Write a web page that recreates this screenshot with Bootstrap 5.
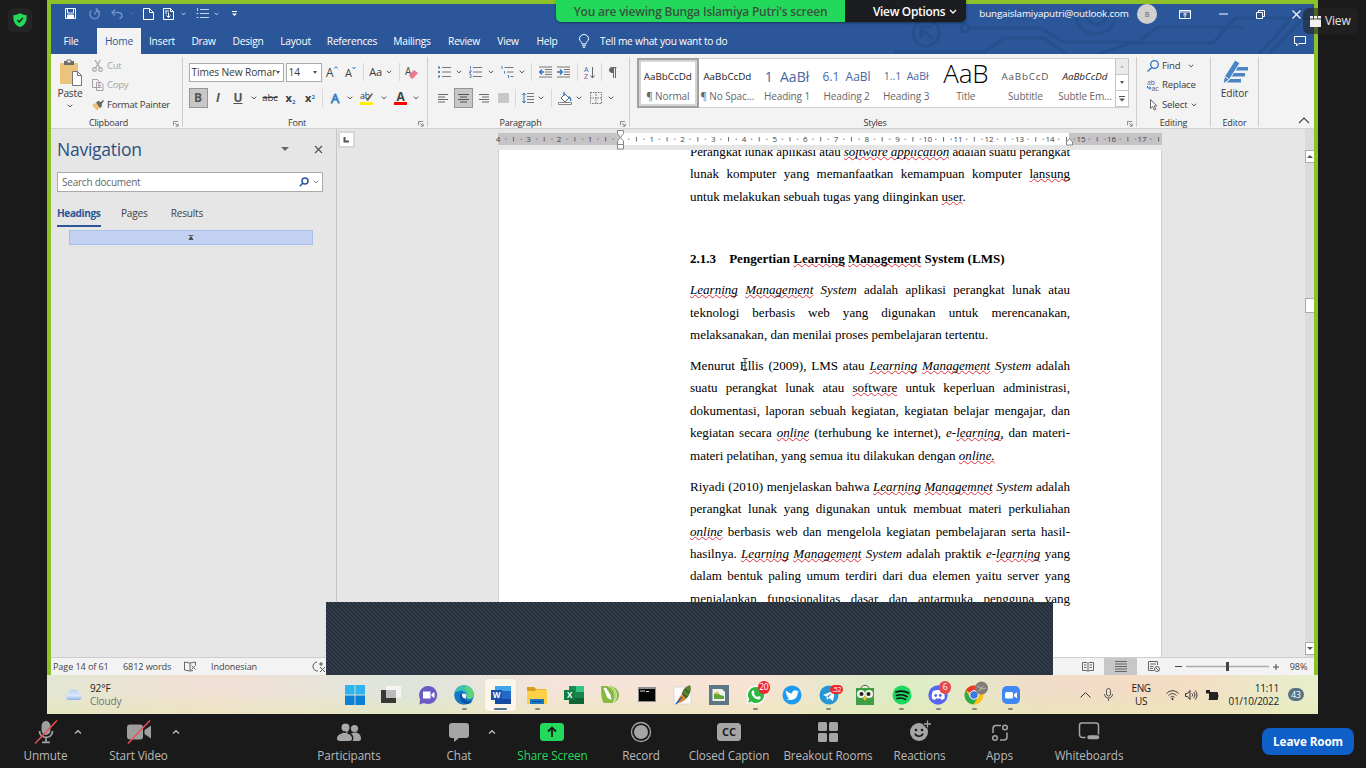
<!DOCTYPE html>
<html lang="id">
<head>
<meta charset="utf-8">
<title>Shared screen</title>
<link rel="stylesheet" href="https://cdn.jsdelivr.net/npm/bootstrap@5.3.0/dist/css/bootstrap.min.css">
<script src="https://cdn.jsdelivr.net/npm/bootstrap@5.3.0/dist/js/bootstrap.bundle.min.js"></script>
<style>
body{width:1366px;height:768px;overflow:hidden;background:#1a1a1a;font-family:"Open Sans","Liberation Sans",sans-serif;font-size:9.6px;line-height:12px;letter-spacing:-.18px;color:#444}
svg{display:block;flex:none;overflow:visible}
.stage{height:714px}
.shared{margin-left:47px;width:1271px}
.word{height:675px;border:solid #8dc127;border-width:4px 4px 0;background:#e6e6e6}
.g{display:grid;align-items:center;justify-items:center;white-space:nowrap}
/* title bar */
.bluebar{background:#2b579a;color:#fff;height:50px}
.titlerow{height:24px}
.quick{grid-template-columns:24px 24px 21px 8px 26px 15px 15px 22px 6px 30px;padding-left:7px;height:19px}
.wctl{grid-template-columns:148px 38px 38px 38px 37px 35px;height:18px;font-size:9.8px;letter-spacing:-.14px}
.ava{width:20px;height:20px;background:#d2d0ce;color:#605e5c;font-size:7.5px}
.rtabs{grid-template-columns:40px 6px 44px 42px 41px 48px 47px 66px 54px 50px 38px 40px 33px 130px 1fr;height:26px;font-size:10.2px;letter-spacing:-.24px}
.rtabs .on{background:#f3f3f3;color:#2b579a;width:44px;height:26px;line-height:26px;text-align:center}
.circuit{right:0;top:0}
/* ribbon */
.ribbon{height:75px;background:#f3f3f3;border-bottom:1px solid #d2d0ce;padding-top:3px;color:#3b3a39}
.grp{height:70px;border-right:1px solid #d0cecd;position:relative}
.gl{height:12px;margin:auto 0 -2px;text-align:center;font-size:9px;line-height:12px;color:#333}
.launch{right:3px;bottom:0}
.clip{width:132px}.fnt{width:245px}.par{width:202px}.sty{width:507px}.edi{width:74px}.edr{width:48px}
.pastecol{width:38px;padding-top:3px;line-height:14px;font-size:10.2px}
.cmds{row-gap:7.5px;padding-top:2.5px}
.cmds>div{height:12px}
.cmds.cb{letter-spacing:-.28px;margin-left:-1px}
.edc{padding-left:10px}
.edc>div>svg:first-child{margin-right:3px}
.edtop{padding-top:2px;font-size:10.2px;line-height:16px}
.dis{color:#a6a4a2}
.r1,.r2{height:20px}
.r2{margin-top:6px}
.r1{margin-top:5px}
.f1{grid-template-columns:95px 2px 36px 2px 18px 18px 7px 18px 8px 13px 12px;padding-left:5.5px}
.f2{grid-template-columns:20px 20px 20px 11px 22px 19px 20px 5px 20px 9px 26px 7px 26px 6px;padding-left:5px}
.p1{grid-template-columns:20px 10px 23px 8px 24px 6px 13px 14px 22px 6px 18px 7px 16px;padding-left:6px}
.p2{grid-template-columns:18px 22px 19px 20px 5px 20px 6px 15px 12px 15px 20px 10px;padding-left:6px}
.combo{background:#fff;border:1px solid #ababab;height:19px;font-size:10.2px;line-height:17px;padding-left:2px;width:100%;letter-spacing:-.13px}
.tri{border:solid transparent;border-width:3px 2.5px 0;border-top-color:#555;width:0;height:0}
.sep{width:1px;height:18px;background:#dad8d6}
.prs{background:#c8c6c8;border:1px solid #979593;width:19px;height:20px;display:flex;align-items:center;justify-content:center}
.ink{font-weight:700;font-size:12px;color:#555;letter-spacing:0}
.xs{font-weight:700;font-size:11px;letter-spacing:0}
.xs sub,.xs sup{font-size:6px;color:#2b74c0}
.aa{font-size:11px}
.gal{margin:1px 0 0 7px;width:492px;height:50px;background:#fff;border:1px solid #d2d0ce;border-right:0}
.st{width:59.6px;padding:5px 0 3px;text-align:center;font-size:10px;color:#666;height:48px;white-space:nowrap;letter-spacing:-.1px;line-height:13px}
.st b{display:block;font-weight:400;height:26px;line-height:25px;color:#222;font-size:9.8px;letter-spacing:0}
.st.sel{outline:2px solid #a3a1a0;outline-offset:-1px;box-shadow:inset 0 0 0 3px #d6d4d4}
.st .h{color:#4667a0}
.st .t{font-size:26px;line-height:19px;letter-spacing:-.3px;font-weight:300;color:#000}
.st .h1s{font-size:14px}.st .h2s{font-size:12px}.st .h3s{font-size:10.5px}.st .sb{letter-spacing:.8px;color:#555}
.gs{width:14px;border:1px solid #c8c6c4;border-width:0 1px}
.gs>div{height:16px;display:flex;align-items:center;justify-content:center;border-bottom:1px solid #c8c6c4}
/* navigation pane */
.mid{height:528px}
.nav-p{width:286px;border-right:1px solid #c6c4c3;padding:0 0 0 6px}
.nav-t{font-size:17.5px;line-height:24px;color:#2b4f81;letter-spacing:-.25px;margin-top:8px;width:266px}
.navx{margin:0 0 0 25px}
.find{width:266px;height:20px;margin-top:11px;background:#fff;border:1px solid #ababab;padding:0 3px 0 4px;font-size:10px;color:#666;letter-spacing:-.23px}
.ntab{margin-top:13px;font-size:10.1px;line-height:17px;letter-spacing:-.2px}
.ntab span{height:22px}
.ntab .on{color:#2b579a;font-weight:700;border-bottom:2px solid #2b579a;width:44px;letter-spacing:-.4px}
.np{margin-left:20px}.nr{margin-left:23px}
.hsel{margin:3px 0 0 12px;width:244px;height:15px;background:#c3d2f2;border:1px solid #a8bfe9}
/* document */
.rul{height:21px}.rsvg{margin:4px 0 0 143px}
.tabsel{width:17px;height:17px;background:#fff;border:2px solid #d8d6d6;margin:2px 0 0 1px}
.page{margin-left:161px;width:664px;height:507px;background:#fff;border:solid #cfcdcd;border-width:0 1px;padding:0 91px 0 191px;overflow:hidden;font:13.05px/22.45px "Liberation Serif",serif;letter-spacing:0;color:#000}
.page p{margin:0 0 8.4px}
.page p span{display:block;text-align:justify;text-align-last:justify;white-space:nowrap}
.page p span.l{text-align-last:left}
.page u{text-decoration:underline wavy #e0323c .7px;text-underline-offset:0;text-decoration-skip-ink:none}
.page .first{margin-top:-9px;margin-bottom:40px}
.page .first span:first-child{letter-spacing:-.09px}
.vbar{width:9px;background:#dcdadd;padding-top:21px}
.vbar div{background:#fff;border:1px solid #ababab;border-right:0;height:13px;display:flex;align-items:center;justify-content:center}
.vbar .thumb{height:15px;margin-top:135px;margin-bottom:329px}
.status{height:18px;background:#f3f3f3;border-top:1px solid #cfcdcd;font-size:9.1px;line-height:17px;letter-spacing:-.1px}
.sl{grid-template-columns:54px 61px 43px 48px 67px;justify-items:start;padding-left:2px}
.sr{grid-template-columns:33px 33px 34px 14px 84px 14px 31px}
.vsel{width:33px;height:17px;background:#c8c6c8}
.blind{left:326px;top:602px;width:727px;height:73px;background:linear-gradient(45deg,#27313e 18%,#3b4652 18% 34%,#27313e 34% 68%,#3b4652 68% 84%,#27313e 84%) 0 0/4px 4px}
/* windows task bar */
.task{height:39px;background:linear-gradient(0deg,rgba(232,232,178,.55),rgba(255,255,255,0) 60%),linear-gradient(90deg,#e2e7d2,#f2dfd5 13%,#eae3d8 20%,#dde5dc 28%,#f5e4da 40%,#f8e3d4 56%,#dcecc6 66%,#e2ebc8 71%,#f1dcc9 78%,#f4ddc4 90%,#e6f0cd);letter-spacing:-.1px;color:#222}
.wth{width:289.8px;padding-left:17px;font-size:10px;line-height:13px}
.wt{margin-left:6px}
.apps>div{width:36.45px;height:39px;position:relative;display:flex;justify-content:center;padding-top:10px}
.apps .act{background:#fbf5ea;box-shadow:0 0 1px #ccb;border-radius:3px;position:absolute;width:31px;height:32px;top:4px;left:2px}
.apps svg{position:relative;width:20px;height:20px}
.dotline{width:5px;height:2px;border-radius:1px;background:#8a8a80;position:absolute;bottom:4px}
.wide{width:13px;background:#4f7596}
.tray{grid-template-columns:24px 22px 43px 19px 19px 23px;margin-left:44.500px;font-size:10px;line-height:13px;text-align:center;letter-spacing:-.3px}
.clk{font-size:10px;line-height:13px;padding-top:7px;letter-spacing:-.25px}
.n43{width:16px;height:13px;background:#587283;color:#fff;font-size:8.5px;line-height:13px;text-align:center;margin:0 14px 0 9px}
.bub{position:absolute;background:#f0282d;color:#fff;border-radius:9px;font-size:8.5px;line-height:12.5px;height:12.5px;min-width:12.5px;padding:0 1.5px;text-align:center;top:6px;left:20px;letter-spacing:-.3px}
.bub.tg{left:20px;font-size:7px;height:9px;line-height:9px;top:10px}.bub.dc{left:19px;background:#e8494f}
/* meeting controls */
.zoombar{height:54px;color:#b9b9b9;font-size:11.7px;letter-spacing:-.1px}
.zg{grid-template-columns:51px 37px 61px 96px 168px 52px 20px 95px 82px 94px 104px 79px 81px 98px;padding-left:20px;height:54px}
.zg>div{display:flex;flex-direction:column;align-items:center;position:relative;height:54px;padding-top:6px;line-height:17px}
.zg>div>svg{height:24px;width:26px;margin-bottom:3px}
.zg .c{justify-self:start;padding-top:15px}
.zg .c svg{width:14px;height:6px}
.cnt{position:absolute;left:75%;margin-left:-23px;top:7px}
.share{color:#23d95b}
.leave{background:#0e5fc7;color:#fff;font-weight:700;width:92px;height:27px;border-radius:8px;line-height:26px;text-align:center;margin:14px 12px 0 auto;letter-spacing:-.1px;font-size:11.7px}
.banner{left:556px;top:0;height:22px;font-size:11.9px;line-height:22px;font-weight:600;border-radius:0 0 5px 5px;overflow:hidden;z-index:3;box-shadow:0 1px 3px #0006}
.bn1{width:289px;background:#23d95b;color:#35533f;text-align:center}
.bn2{width:121px;background:#1c1d20;color:#fff;padding-left:28px;letter-spacing:-.3px}
.vbtn{left:1303px;top:8px;width:55px;height:26px;border-radius:6px;background:rgba(36,36,36,.6);color:#e4e4e4;font-size:12px;padding-left:7px;z-index:3}
.shield{left:8px;top:8px;width:24px;height:24px;background:#242424;border-radius:5px}
.caret-i{left:741px;top:358px}
</style>
</head>
<body>
<svg width="0" height="0" class="position-absolute">
<symbol id="ch" viewBox="0 0 6 4"><path d="M.8 .7 3 2.9 5.2 .7" fill="none" stroke="currentColor" stroke-width=".9"/></symbol>
<symbol id="la" viewBox="0 0 7 7"><path d="M.5 5V.5H6M2.5 2.5 5.6 5.6M6 3v3H3" fill="none" stroke="#666" stroke-width=".9"/></symbol>
<symbol id="up" viewBox="0 0 14 6"><path d="M4 4.6 7 1.8 10 4.6" fill="none" stroke="#b9b9b9" stroke-width="1.4"/></symbol>
</svg>

<main class="stage position-relative">
<div class="shared">
<div class="word d-flex flex-column">
  <header class="bluebar position-relative flex-shrink-0">
    <svg class="circuit position-absolute overflow-hidden" width="420" height="50" fill="none" stroke="#264f8e" stroke-width="3"><circle cx="32" cy="29" r="13"/><path d="M27 34V23h11M28 24l10 11"/><circle cx="71" cy="24" r="4"/><path d="M75 24h72l22 14h75l20-15h55l30 0M0 48h90l20-14h40l22 16M182 6c-4 32 42 32 40 0M190 5c2 20 24 20 24 0M365 50l42-46M375 50l45-48M205 50l32-11h82l22-25h79"/></svg>
    <div class="titlerow d-flex justify-content-between position-relative">
      <div class="quick g">
        <svg width="11" height="11" fill="none" stroke="#fff"><path d="M.5.5h10v10H.5zM2.500 .5v4.500h6V.5"/><path d="M2.500 10.500V7h6v3.500" fill="#fff"/></svg>
        <svg width="11" height="12" fill="none" stroke="#6f8fc4" stroke-width="1.500"><path d="M2.500 2.500A4.700 4.700 0 1 0 8 2M7.500 0v3.500H11M6 4v2.500"/></svg>
        <svg width="12" height="10" fill="none" stroke="#6f8fc4" stroke-width="1.500"><path d="M4 .5 1 3.500l3 3M1 3.500h6c5 0 5 5 1.500 6"/></svg>
        <svg width="5" height="3" color="#6f8fc4"><use href="#ch"/></svg>
        <svg width="11" height="12" fill="none" stroke="#fff"><path d="M.5.5h6l4 4v7H.5zM6.500.5v4h4"/></svg>
        <svg width="11" height="12" fill="none" stroke="#fff"><path d="M.5.5h7l3 3v8H.5zM7.500.5v3h3M2 3h4M2 5h2M5.500 4.500v5M3.500 7.500l2 2 2-2" /></svg>
        <svg width="5" height="4"><use href="#ch"/></svg>
        <svg width="13" height="11" fill="none" stroke="#c5d4ec"><path d="M4 1.500h9M4 5.500h9M4 9.500h9M1.500 0v3M.5 5.500h2M.5 9.500h2"/></svg>
        <svg width="5" height="4"><use href="#ch"/></svg>
        <svg width="5" height="6" fill="#fff"><path d="M0 0h5v1H0zM0 2.500h5L2.500 5z"/></svg>
      </div>
      <div class="wctl g">
        <span>bungaislamiyaputri@outlook.com</span>
        <span class="ava rounded-circle d-flex align-items-center justify-content-center">B</span>
        <svg width="12" height="9" fill="none" stroke="#fff"><path d="M.5.5h11v8H.5zM.5 2h11M6 7.500v-4M4.300 5 6 3.500 7.700 5"/></svg>
        <svg width="9" height="2"><path d="M0 1h9" stroke="#fff"/></svg>
        <svg width="9" height="9" fill="none" stroke="#fff"><path d="M.5 2.500h6v6h-6zM2.500 2V.5h6v6H7"/></svg>
        <svg width="9" height="9"><path d="m.5.5 8 8m0-8-8 8" stroke="#fff" stroke-width="1.100"/></svg>
      </div>
    </div>
    <div class="rtabs g position-relative">
      <span>File</span><i></i><span class="on">Home</span><span>Insert</span><span>Draw</span><span>Design</span><span>Layout</span><span>References</span><span>Mailings</span><span>Review</span><span>View</span><span>Help</span>
      <svg width="10" height="14" fill="none" stroke="#fff"><path d="M3 10C3 7.500 .5 7.500 .5 4.800a4.500 4.300 0 0 1 9 0C9.500 7.500 7 7.500 7 10zM3.200 11.700h3.600M3.800 13.300h2.400"/></svg>
      <span class="me-auto">Tell me what you want to do</span>
      <svg width="12" height="11" fill="none" stroke="#fff" class="ms-auto me-2"><path d="M.5.5h11v7H4.800L2.500 10V7.500h-2z"/></svg>
    </div>
  </header>

  <section class="ribbon d-flex flex-shrink-0">
    <div class="grp clip d-flex flex-column">
      <div class="d-flex">
        <div class="pastecol d-flex flex-column align-items-center">
          <svg width="24" height="26"><path d="M2 3h18v21H2z" fill="#e9c47a"/><path d="M6 1h10v4H6z" fill="#6b6b6b"/><path d="M9 0h4v3H9z" fill="#f3f3f3" stroke="#6b6b6b"/><path d="M14.500 11.500h5l4 4v10h-9z" fill="#fff" stroke="#777"/><path d="M19.500 11.500v4h4" fill="none" stroke="#777"/></svg>
          <span>Paste</span><svg width="6" height="4" class="mt-1"><use href="#ch"/></svg>
        </div>
        <div class="cmds cb d-flex flex-column ps-1">
          <div class="dis d-flex align-items-center gap-1"><svg width="11" height="12" fill="none" stroke="#a6a4a2" stroke-width="1.200"><path d="M3 0 8 8M8.500 0l-5 8"/><circle cx="2.500" cy="9.500" r="1.800"/><circle cx="8.500" cy="9.500" r="1.800"/></svg><span>Cut</span></div>
          <div class="dis d-flex align-items-center gap-1"><svg width="11" height="12" fill="#f3f3f3" stroke="#a99da9"><path d="M.5.5h5l1.500 2v6H.5zM4.500 3.500h4.500l2 2v6H4.500z"/><path d="M6 6.500h3M6 8.500h3.500"/></svg><span>Copy</span></div>
          <div class="d-flex align-items-center gap-1"><svg width="11" height="12"><path d="M0 6l4-2 4 4-3 3.500z" fill="#ecc075"/><path d="M4 3.500 6 2l3 1 2-2 1 1-2 2.500-.5 3.500L8 9z" fill="#666"/></svg><span>Format Painter</span></div>
        </div>
      </div>
      <div class="gl pe-3">Clipboard</div><svg class="launch position-absolute" width="6" height="6"><use href="#la"/></svg>
    </div>
    <div class="grp fnt d-flex flex-column">
      <div class="f1 r1 g">
        <div class="combo d-flex align-items-center justify-content-between pe-1">Times New Romar<i class="tri"></i></div><i></i>
        <div class="combo d-flex align-items-center justify-content-between pe-1">14<i class="tri"></i></div><i></i>
        <svg width="13" height="12"><text x="0" y="11" font-size="12" fill="#444">A</text><path d="m8.500 2.500 1.500-1.800 1.500 1.800" fill="none" stroke="#2b74c0"/></svg>
        <svg width="12" height="12"><text x="0" y="11" font-size="11" fill="#444">A</text><path d="m7.500 1 1.500 1.800L10.500 1" fill="none" stroke="#2b74c0"/></svg>
        <i class="sep"></i><span class="aa">Aa</span><svg width="6" height="4"><use href="#ch"/></svg><i class="sep"></i>
        <svg width="13" height="13"><text x="0" y="9" font-size="10" fill="#444">A</text><path d="m4 9 5-5 4 3-5 5.500H6z" fill="#e9798d"/></svg>
      </div>
      <div class="f2 r2 g">
        <div class="prs ink">B</div><i class="ink">I</i><span class="ink text-decoration-underline">U</span><svg width="6" height="4"><use href="#ch"/></svg>
        <s>abc</s><span class="xs">x<sub>2</sub></span><span class="xs">x<sup>2</sup></span><i class="sep"></i>
        <svg width="11" height="12"><text x="1" y="11" font-size="13" fill="#e8f1fb" stroke="#3f80c4" stroke-width=".9">A</text></svg><svg width="6" height="4"><use href="#ch"/></svg>
        <svg width="14" height="14"><text x="0" y="8" font-size="9" fill="#333">ab</text><path d="m6 9 6-7 1 1-5 7z" fill="#666"/><path d="M0 11h13v3H0z" fill="#ffef00"/></svg><svg width="6" height="4"><use href="#ch"/></svg>
        <svg width="13" height="14"><text x="2.500" y="9.500" font-size="12" fill="#444" font-weight="700">A</text><path d="M0 11h13v3H0z" fill="#f00"/></svg><svg width="6" height="4"><use href="#ch"/></svg>
      </div>
      <div class="gl pe-3">Font</div><svg class="launch position-absolute" width="6" height="6"><use href="#la"/></svg>
    </div>
    <div class="grp par d-flex flex-column">
      <div class="p1 r1 g">
        <svg width="13" height="12"><path d="M4 1.500h9M4 6h9M4 10.500h9" stroke="#777"/><path d="M0 .5h2v2H0zM0 5h2v2H0zM0 9.500h2v2H0z" fill="#3f80c4"/></svg><svg width="6" height="4"><use href="#ch"/></svg>
        <svg width="13" height="12"><path d="M4 1.500h9M4 6h9M4 10.500h9" stroke="#777"/><path d="M1.500 0v3M.5 4.500h1.500v1.500H.5v1H2M.5 8.500h1.500v3H.5" fill="none" stroke="#3f80c4" stroke-width=".9"/></svg><svg width="6" height="4"><use href="#ch"/></svg>
        <svg width="13" height="12"><path d="M3.500 1.500h9M6 6h6.500M9.500 10.500h3" stroke="#777"/><path d="M1 0v3M3.500 5v2.500M7.500 9v3" stroke="#3f80c4"/></svg><svg width="6" height="4"><use href="#ch"/></svg><i class="sep"></i>
        <svg width="13" height="12"><path d="M0 1h13M6 3.500h7M6 6h7M6 8.500h7M0 11h13" stroke="#777"/><path d="M5 6H1M3 3.500.7 6 3 8.500" stroke="#2b74c0" fill="none" stroke-width="1.300"/></svg>
        <svg width="13" height="12"><path d="M0 1h13M7 3.500h6M7 6h6M7 8.500h6M0 11h13" stroke="#777"/><path d="M0 6h5M3 3.500 5.300 6 3 8.500" stroke="#2b74c0" fill="none" stroke-width="1.300"/></svg><i class="sep"></i>
        <svg width="11" height="13"><text y="5.500" font-size="7" fill="#2b74c0">A</text><text y="13" font-size="7" fill="#7d4a9b">Z</text><path d="M8.500 1v11M6.500 9.500l2 2.500 2-2.500" fill="none" stroke="#666"/></svg><i class="sep"></i>
        <svg width="8" height="11"><path d="M7.500.5H3a2 2 0 0 0 0 5h1.500M4.500.5V11M6.500.5V11" fill="none" stroke="#666"/><path d="M3 .5h1.500v5H3a2.500 2.500 0 0 1 0-5" fill="#666"/></svg>
      </div>
      <div class="p2 r2 g">
        <svg width="10" height="9"><path d="M0 .5h10M0 3h7M0 5.500h10M0 8h7" stroke="#666"/></svg>
        <div class="prs"><svg width="11" height="9"><path d="M0 .5h11M2 3h7M0 5.500h11M2 8h7" stroke="#555"/></svg></div>
        <svg width="10" height="9"><path d="M0 .5h10M3 3h7M0 5.500h10M3 8h7" stroke="#666"/></svg>
        <svg width="11" height="10"><path d="M0 0h11v10H0z" fill="#c9c7c7"/></svg><i class="sep"></i>
        <svg width="12" height="12"><path d="M5 1.500h7M5 4.500h7M5 7.500h7M5 10.500h7" stroke="#777"/><path d="M2 1v10M.3 3 2 1l1.700 2M.3 9 2 11l1.700-2" fill="none" stroke="#2b74c0"/></svg><svg width="6" height="4"><use href="#ch"/></svg><i class="sep"></i>
        <svg width="14" height="13"><path d="m3 6 4-4 4 4-4 4z" fill="#fff" stroke="#666"/><path d="M6 0v4M10.500 5c2 0 2.500 2 2 4" stroke="#2b74c0" fill="none" stroke-width="1.300"/><path d="M.5 10.500h13v2H.5z" fill="#fff" stroke="#888"/></svg><svg width="6" height="4"><use href="#ch"/></svg>
        <svg width="12" height="12"><path d="M.5.5h11v11H.5zM6 0v12M0 6h12" fill="none" stroke="#777" stroke-dasharray="1.500 1"/></svg><svg width="6" height="4"><use href="#ch"/></svg>
      </div>
      <div class="gl pe-3">Paragraph</div><svg class="launch position-absolute" width="6" height="6"><use href="#la"/></svg>
    </div>
    <div class="grp sty d-flex flex-column">
      <div class="gal d-flex">
        <div class="st sel"><b>AaBbCcDd</b>¶ Normal</div>
        <div class="st"><b>AaBbCcDd</b>¶ No Spac...</div>
        <div class="st"><b class="h h1s">1&nbsp; AaBł</b>Heading 1</div>
        <div class="st"><b class="h h2s">6.1&nbsp; AaBl</b>Heading 2</div>
        <div class="st"><b class="h h3s">1..1&nbsp; AaBł</b>Heading 3</div>
        <div class="st"><b class="t">AaB</b>Title</div>
        <div class="st"><b class="sb">AaBbCcD</b>Subtitle</div>
        <div class="st"><b class="fst-italic">AaBbCcDd</b>Subtle Em...</div>
        <div class="gs ms-auto"><div class="bg-body-secondary"><svg width="4" height="3"><path d="M0 2.500h4L2 .5z" fill="#aaa"/></svg></div><div><i class="tri"></i></div><div><svg width="6" height="6" fill="#555"><path d="M0 0h6v1H0zM0 2.500h6L3 5.500z"/></svg></div></div>
      </div>
      <div class="gl pe-3">Styles</div><svg class="launch position-absolute" width="6" height="6"><use href="#la"/></svg>
    </div>
    <div class="grp edi d-flex flex-column">
      <div class="cmds edc d-flex flex-column">
        <div class="d-flex align-items-center"><svg width="12" height="12" fill="none" stroke="#2b74c0" stroke-width="1.300"><circle cx="7.500" cy="4.500" r="3.800"/><path d="M5 7.500.5 11.500"/></svg><span>Find</span><svg width="6" height="4" class="ms-2"><use href="#ch"/></svg></div>
        <div class="d-flex align-items-center"><svg width="12" height="12"><text y="5.500" font-size="7" fill="#7d4a9b">ab</text><text x="4.500" y="12" font-size="7" fill="#555">ac</text><path d="M.5 7v2h3M2.500 7.500 4 9 2.500 10.500" fill="none" stroke="#2b74c0"/></svg><span>Replace</span></div>
        <div class="d-flex align-items-center"><svg width="12" height="12"><path d="M3.500.5v9l2.200-2 1.600 3.500 1.500-.6L7.200 7h2.600z" fill="#fff" stroke="#666"/></svg><span>Select</span><svg width="6" height="4" class="ms-1"><use href="#ch"/></svg></div>
      </div>
      <div class="gl">Editing</div>
    </div>
    <div class="grp edr d-flex flex-column">
      <div class="d-flex flex-column align-items-center edtop"><svg width="26" height="26"><path d="M12 8h14v3.500H11zM10 14h13v3.500H8zM7 20h12v3.500H5z" fill="#4a86c5"/><path d="M1 25 2.500 17.500 13 1l5 3L7 21z" fill="#4a86c5" stroke="#f3f3f3"/><path d="M3 17.500 7 20.500" stroke="#fff"/></svg><span>Editor</span></div>
      <div class="gl">Editor</div>
    </div>
    <svg width="12" height="7" class="ms-auto me-1 mt-auto mb-1"><path d="m1 6 5-5 5 5" fill="none" stroke="#444" stroke-width="1.100"/></svg>
  </section>

  <div class="mid d-flex">
    <aside class="nav-p flex-shrink-0">
      <div class="nav-t d-flex align-items-center"><span>Navigation</span><svg width="8" height="4" class="ms-auto"><path d="M0 0h8L4 4z" fill="#666"/></svg><svg width="9" height="9" class="navx"><path d="m1 1 7 7m0-7-7 7" stroke="#555" stroke-width="1.200"/></svg></div>
      <div class="find d-flex align-items-center"><span>Search document</span><svg width="10" height="10" class="ms-auto me-1" fill="none" stroke="#2b579a" stroke-width="1.500"><circle cx="6" cy="4" r="3"/><path d="M4 6 .8 9.200"/></svg><svg width="6" height="4"><use href="#ch"/></svg></div>
      <div class="ntab d-flex"><span class="on">Headings</span><span class="np">Pages</span><span class="nr">Results</span></div>
      <div class="hsel d-flex align-items-center justify-content-center"><svg width="6" height="5"><path d="M.5.500h5M1 4.500h4L3 1.500z" stroke="#444" fill="#444" stroke-width=".8"/></svg></div>
    </aside>
    <div class="flex-grow-1">
      <div class="d-flex rul">
        <div class="tabsel"><svg width="13" height="13"><path d="M4.500 4v4.500H9" fill="none" stroke="#555" stroke-width="2"/></svg></div>
        <svg class="rsvg" width="664" height="17" font-size="8" fill="#444" text-anchor="middle">
          <defs><pattern id="tk" x="123" width="30.720" height="12" patternUnits="userSpaceOnUse"><path d="M7.700 5.500v1.500M23 5.500v1.500" stroke="#777"/><path d="M15.400 4v4.500" stroke="#666"/></pattern></defs>
          <path d="M0 0h123v12H0zM571 0h93v12h-93z" fill="#c5c3c6"/><path d="M123 0h448v12H123z" fill="#fff"/><path d="M4 0h658v12H4z" fill="url(#tk)"/>
          <text x="0" y="9">4</text><text x="30.500" y="9">3</text><text x="61" y="9">2</text><text x="92" y="9">1</text><text x="153.700" y="9">1</text><text x="184.400" y="9">2</text><text x="215.200" y="9">3</text><text x="245.900" y="9">4</text><text x="276.600" y="9">5</text><text x="307.300" y="9">6</text><text x="338" y="9">7</text><text x="368.800" y="9">8</text><text x="399.500" y="9">9</text><text x="429.500" y="9">10</text><text x="460" y="9">11</text><text x="491" y="9">12</text><text x="521.500" y="9">13</text><text x="552" y="9">14</text><text x="583" y="9">15</text><text x="613.500" y="9">16</text><text x="644" y="9">17</text>
          <path d="M119.500-2.500h6v3l-3 4 3 3.500v8h-6v-8l3-3.500-3-4zM119.500 11.500h6M568.500 12V9l3-3.500 3 3.500v3z" fill="#fff" stroke="#888"/>
        </svg>
      </div>
      <article class="page">
        <p class="first"><span>Perangkat lunak aplikasi atau <em><u>software application</u></em> adalah suatu perangkat</span><span>lunak komputer yang memanfaatkan kemampuan komputer <u>lansung</u></span><span class="l">untuk melakukan sebuah tugas yang diinginkan <u>user</u>.</span></p>
        <p class="fw-bold"><span class="l">2.1.3&emsp;Pengertian <u>Learning</u> <u>Management</u> System (LMS)</span></p>
        <p><span><em><u>Learning</u> <u>Management</u> System</em> adalah aplikasi perangkat lunak atau</span><span>teknologi berbasis web yang digunakan untuk merencanakan,</span><span class="l">melaksanakan, dan menilai proses pembelajaran tertentu.</span></p>
        <p><span>Menurut Ellis (2009), LMS atau <em><u>Learning</u> <u>Management</u> System</em> adalah</span><span>suatu perangkat lunak atau <u>software</u> untuk keperluan administrasi,</span><span>dokumentasi, laporan sebuah kegiatan, kegiatan belajar mengajar, dan</span><span>kegiatan secara <em><u>online</u></em> (terhubung ke internet), <em>e-<u>learning,</u></em> dan materi-</span><span class="l">materi pelatihan, yang semua itu dilakukan dengan <em><u>online.</u></em></span></p>
        <p><span>Riyadi (2010) menjelaskan bahwa <em><u>Learning</u> <u>Managemnet</u> System</em> adalah</span><span>perangkat lunak yang digunakan untuk membuat materi perkuliahan</span><span><em><u>online</u></em> berbasis web dan mengelola kegiatan pembelajaran serta hasil-</span><span>hasilnya. <em><u>Learning</u> <u>Management</u> System</em> adalah praktik <em>e-<u>learning</u></em> yang</span><span>dalam bentuk paling umum terdiri dari dua elemen yaitu server yang</span><span>menjalankan fungsionalitas dasar dan antarmuka pengguna yang</span></p>
      </article>
    </div>
    <div class="vbar flex-shrink-0"><div><svg width="6" height="3"><path d="M0 3h6L3 0z" fill="#555"/></svg></div><div class="thumb"></div><div><svg width="6" height="3"><path d="M0 0h6L3 3z" fill="#555"/></svg></div></div>
  </div>
  <footer class="status d-flex justify-content-between flex-shrink-0">
    <div class="sl g"><span>Page 14 of 61</span><span class="ps-3">6812 words</span><svg class="ms-3" width="12" height="11" fill="none" stroke="#666"><path d="M6 2v8M6 2 .5 1v8L6 10l3-.5M6 2l5.500-1v3M7.500 4.500l4 4m0-4-4 4"/></svg><span>Indonesian</span><svg class="ms-auto" width="13" height="12" fill="none" stroke="#555"><path d="M4 1A4.500 4.500 0 0 0 5 10M6 3h4M8 1v4M7 6l5 5m0-5-5 5"/></svg></div>
    <div class="sr g">
      <svg width="12" height="10" fill="none" stroke="#666"><path d="M6 1.500v8M.5.5H5l1 1 1-1h4.500v8H7l-1 1-1-1H.5zM2 3h2.500M2 5.500h2.500M7.500 3H10M7.500 5.500H10"/></svg>
      <div class="vsel d-flex align-items-center justify-content-center"><svg width="12" height="11"><path d="M0 .5h12M0 3h12M0 5.500h12M0 8h12M0 10.500h12" stroke="#666"/></svg></div>
      <svg width="13" height="11" fill="none" stroke="#666"><path d="M6 9.500H.5v-9h9V4M2 3h6M2 5.500h3.500M2 7.500h3"/><circle cx="9" cy="8" r="2.500"/><path d="m7.500 6.500 3 3"/></svg>
      <svg width="7" height="1"><path d="M0 .5h7" stroke="#444"/></svg>
      <svg width="83" height="9"><path d="M0 4.500h83" stroke="#aaa" stroke-width="1.500"/><path d="M40 0h3v9h-3z" fill="#444"/></svg>
      <svg width="6" height="6"><path d="M0 3h6M3 0v6" stroke="#444"/></svg><span>98%</span>
    </div>
  </footer>
</div>

<div class="task d-flex">
  <div class="wth d-flex align-items-center flex-shrink-0"><svg width="20" height="13"><defs><linearGradient id="cl" x2="0" y2="1"><stop stop-color="#b9cff2"/><stop offset=".6" stop-color="#dce8fa"/><stop offset="1" stop-color="#8fb0e6"/></linearGradient></defs><path d="M4 12a4 4 0 0 1 0-7A6 6 0 0 1 15 4.500 4 4 0 0 1 16 12z" fill="url(#cl)"/></svg><div class="wt">92°F<br><span class="text-secondary">Cloudy</span></div></div>
  <nav class="apps d-flex flex-shrink-0">
    <div><svg viewBox="0 0 20 20"><path d="M0 0h9.600v9.600H0zM10.400 0H20v9.600h-9.600z" fill="#2fb4f0"/><path d="M0 10.400h9.600V20H0zM10.400 10.400H20V20h-9.600z" fill="#0b80d6"/></svg></div>
    <div><svg viewBox="0 0 20 20"><path d="M0 5h15v13H0z" fill="#3a3837"/><path d="M5 1h15v12H5z" fill="#f7f5f5" opacity=".9"/><path d="M5 5h10v8H5z" fill="#bdbbbb"/></svg></div>
    <div><svg viewBox="0 0 20 20"><path d="M10 1a9 9 0 1 1-4 17L1.500 19.500 2 14A9 9 0 0 1 10 1" fill="#6b5cc4"/><path d="M5 6.500h7.500v7H5z" fill="#fff"/><path d="m13.500 9 3-2v6l-3-2z" fill="#fff"/></svg></div>
    <div><svg viewBox="0 0 20 20"><circle cx="10" cy="10" r="9.800" fill="#1376c7"/><path d="M.5 8A9.800 9.800 0 0 1 19.800 9c.3 3-2 5-5 5-2 0-3-1-2-2.500C13.500 8 9 5 5 6 2 6.500 1 8 .5 8" fill="#35c5b4"/><path d="M13 1a9.800 9.800 0 0 1 6.700 9c0 2-2 4-5 4-2-.2-2-2-1.500-3 2-3-1-7-3-8z" fill="#5fd37a"/><path d="M7 9c-3 4 1 10 7 10 2-.5 3.500-1.500 4.500-3-5 2-9-1-8-5z" fill="#0c4fa0"/><path d="M8 9.500c1-2 5-1 4.500 1.200-.5 1-.8 1.800-.2 2.600C9.500 14 7.500 12 8 9.500" fill="#edf3f3"/></svg><i class="dotline"></i></div>
    <div><i class="act"></i><svg viewBox="0 0 20 20"><path d="M4 1h16v18H4z" fill="#2468c8"/><path d="M4 1h16v5H4z" fill="#41a5ee"/><path d="M4 14h16v5H4z" fill="#164aa0"/><path d="M0 5h11v10H0z" fill="#1553b0"/><text x="5.500" y="13" font-size="8" font-weight="700" text-anchor="middle" fill="#fff">W</text></svg><i class="dotline wide"></i></div>
    <div><svg viewBox="0 0 20 20"><path d="M0 2h7l2 2h10v5H0z" fill="#dc9d1c"/><path d="M0 6h8l2-1.500h10V19H0z" fill="#fdd04a"/><path d="M3 14h14v5H3z" fill="#1d78c4"/><path d="M5 16.500h10" stroke="#0d4f8c"/></svg><i class="dotline"></i></div>
    <div><svg viewBox="0 0 20 20"><path d="M5 1h7v18H5z" fill="#1a8f55"/><path d="M12 1h8v6h-8z" fill="#33c481"/><path d="M12 7h8v6h-8z" fill="#17854a"/><path d="M5 13h15v6H5z" fill="#0f6438"/><path d="M0 5h11v10H0z" fill="#107c41"/><text x="5.500" y="13" font-size="8" font-weight="700" text-anchor="middle" fill="#fff">X</text></svg></div>
    <div><svg viewBox="0 0 20 20"><path d="M1 1h7c8 0 11 5 11 9s-3 7-6 8H4C2 16 1 12 1 1" fill="#86bb3a"/><path d="M8 1c7 3 9 10 5 17M12 2c5 3 6 11 2 15" fill="none" stroke="#e4f1d0" stroke-width=".9"/><path d="m3 3 3-1 5 8 1 6-5-3z" fill="#fff" stroke="#6a9a2b" stroke-width=".6"/></svg></div>
    <div><svg viewBox="0 0 20 20"><path d="M1 2h18v15H1z" fill="#8e8e8e"/><path d="M2 4h16v12H2z" fill="#050505"/><path d="M3 6h5M9 6.500h3" stroke="#ddd"/></svg></div>
    <div><svg viewBox="0 0 20 20"><path d="M1 2h17v17H1z" fill="#fafafa" stroke="#d0d0d0" stroke-width=".7"/><path d="M4 18c1-3 2-7 6-9l3 5c-2 2-5 4-9 4" fill="#e8842a"/><path d="M9 9c0-5 5-8 8-9 2 4 0 10-4 14z" fill="#5d7f2c"/><path d="M9 8c1 2 3 3 5 4M12 4c1 2 3 3 4.500 3.500" stroke="#243" fill="none"/><path d="m3 19 6-7" stroke="#2669b0" stroke-width="1.500"/></svg></div>
    <div><svg viewBox="0 0 20 20"><path d="M0 0h20v20H0z" fill="#5d7785"/><path d="M3.500 4H13l3 3v9H3.500z" fill="#eef3ee"/><path d="M5 14V9l3-2 3 3 4 1v3z" fill="#62a53c"/><circle cx="8" cy="8" r="1.500" fill="#e3c53a"/></svg></div>
    <div><svg viewBox="0 0 20 20"><path d="M10 .5a9.500 9.500 0 1 1-5 17.600L0 19.500l1.500-5A9.500 9.500 0 0 1 10 .5" fill="#fff"/><path d="M10 2a8 8 0 1 1-4.500 14.500L2 17.800l1.200-3.600A8 8 0 0 1 10 2" fill="#2bb741"/><path d="M6 6c1.500-1.500 2-.5 2.500 1.500L8 9c1 1.500 2 2.300 3.500 3l1.200-1c2 .8 2.500 1 2 2-1 2-3 1.800-5 .8C7 12 4.500 9 6 6" fill="#fff"/></svg><span class="bub">20</span><i class="dotline"></i></div>
    <div><svg viewBox="0 0 20 20"><circle cx="10" cy="10" r="9.500" fill="#1d9bf0"/><path d="M4 5.500c2 2 4 3 6 3 0-3 3.500-4 5-2.300l2-.6-1.300 2c.3 6-5.700 9.400-11.700 6.400 1.500 0 2.500-.4 3.300-1.100-1.300-.1-2-.8-2.300-1.800H6C4.700 10.500 4 9.700 4 8.500l1 .2C3.700 7.500 3.500 6.500 4 5.500" fill="#fff"/></svg></div>
    <div><svg viewBox="0 0 20 20"><circle cx="10" cy="10" r="9.500" fill="#2497d4"/><path d="m4 10 12-5-2 11-4-3-2 2-.5-3.500z" fill="#fff"/><path d="m8 11.500 5-4-3.500 5z" fill="#2497d4"/></svg><span class="bub tg">.52</span><i class="dotline"></i></div>
    <div><svg viewBox="0 0 20 20"><path d="M6 4c0-5 8-5 8 0" stroke="#555" fill="none"/><path d="M1 3h18v17H1z" fill="#3f9f46"/><circle cx="6" cy="9" r="4" fill="#f5f5e4"/><circle cx="14" cy="9" r="4" fill="#f5f5e4"/><circle cx="6.500" cy="9" r="2" fill="#222"/><circle cx="13.500" cy="9" r="2" fill="#222"/><path d="m8 13 2-2 2 2-2 3z" fill="#f0b92d"/></svg></div>
    <div><svg viewBox="0 0 20 20"><circle cx="10" cy="10" r="9.500" fill="#1ed760"/><path d="M4 7c4-1.400 9-1 12.500 1M4.500 10.500c3.500-1.200 7.500-.8 10.500 1M5 13.500c3-.9 6-.5 8.500.9" fill="none" stroke="#111" stroke-width="1.700" stroke-linecap="round"/></svg><i class="dotline"></i></div>
    <div><svg viewBox="0 0 20 20"><circle cx="10" cy="10" r="9.700" fill="#5865f2"/><path d="M5 6c3-1.500 7-1.500 10 0 1.500 2.500 2 5 1.500 7.500-1.500 1.300-3 1.500-3 1.500l-.8-1.500h-5L7 15s-1.700-.3-3-1.500C3.300 11 3.800 8 5 6" fill="#fff"/><circle cx="7.700" cy="10.500" r="1.400" fill="#5865f2"/><circle cx="12.300" cy="10.500" r="1.400" fill="#5865f2"/></svg><span class="bub dc">6</span><i class="dotline"></i></div>
    <div><svg viewBox="0 0 20 20"><circle cx="10" cy="10" r="9.500" fill="#fbc116"/><path d="M10 10 1.800 5.200A9.500 9.500 0 0 1 18.200 5.200H10z" fill="#e33b2e"/><path d="M1.800 5.200A9.500 9.500 0 0 0 9.500 19.500L13.800 12.500 10 10 5.900 12.300z" fill="#2da94f"/><circle cx="10" cy="10" r="4.300" fill="#3b78e7" stroke="#fff"/><circle cx="17.500" cy="3" r="6.500" fill="#817d77"/><path d="M13 1l5 3 4-1M15 6l4-5" stroke="#bbb8b0" fill="none"/></svg><i class="dotline"></i></div>
    <div><svg viewBox="0 0 20 20"><rect x="1" y="1" width="18" height="18" rx="5" fill="#3f87f5"/><rect x="4" y="7" width="8" height="6.500" rx="1.500" fill="#fff"/><path d="m13 9.300 3-2v5.900l-3-2z" fill="#fff"/></svg><i class="dotline"></i></div>
  </nav>
  <div class="tray g">
    <svg width="11" height="6"><path d="m.5 5.500 5-5 5 5" fill="none" stroke="#333"/></svg>
    <svg width="9" height="13" fill="none" stroke="#555"><rect x="2.500" y=".5" width="4" height="7.500" rx="2"/><path d="M.5 6c0 5.500 8 5.500 8 0M4.500 10.500V13"/></svg>
    <span>ENG<br>US</span>
    <svg width="13" height="10" fill="none" stroke="#333"><path d="M.5 3.500c3.500-3.700 8.500-3.700 12 0M2.500 5.500c2.500-2.500 5.500-2.500 8 0M4.500 7.300c1.300-1.200 2.700-1.200 4 0"/><circle cx="6.500" cy="9" r=".7" fill="#333"/></svg>
    <svg width="12" height="10" fill="none" stroke="#333"><path d="M.5 3.500h2l2.500-3v9l-2.500-3h-2zM7 3.500c.8 1 .8 2 0 3M8.700 2c1.600 2 1.600 4 0 6M10.300.5c2.200 3 2.200 6 0 9"/></svg>
    <svg width="13" height="10"><path d="M3 3h8v6H3zM11 5h1.500v2H11zM0 0h4v3.500H0z" fill="#222"/><path d="M2.500 2.500h9v7h-9" fill="none" stroke="#222"/></svg>
  </div>
  <div class="clk ms-auto text-end">11:11<br>01/10/2022</div><div class="n43 rounded-pill align-self-center">43</div>
</div>
</div>

<div class="blind position-absolute"></div>
<div class="banner position-absolute d-flex"><div class="bn1">You are viewing Bunga Islamiya Putri's screen</div><div class="bn2 d-flex align-items-center gap-1"><span>View Options</span><svg width="8" height="5"><path d="m1 1 3 3 3-3" fill="none" stroke="#fff" stroke-width="1.300"/></svg></div></div>
<div class="vbtn position-absolute d-flex align-items-center gap-1"><svg width="11" height="11" fill="#f2f2f2"><path d="M0 0h3v2.500H0zM4 0h3v2.500H4zM8 0h3v2.500H8zM0 3.500h11V11H0z"/></svg><span>View</span></div>
<div class="shield position-absolute d-flex align-items-center justify-content-center"><svg width="14" height="14"><path d="M7 0c2 1.500 4 2 6.500 2 .5 6-1 10-6.500 12C1.500 12 0 8 .5 2 3 2 5 1.500 7 0" fill="#23d95b"/><path d="m4.300 7 2 2 3.500-4" stroke="#1a1a1a" stroke-width="1.400" fill="none"/></svg></div>
<svg class="caret-i position-absolute" width="8" height="14"><path d="M1.500.5h5M4 .5V13M2 12.500h4" stroke="#444" fill="none"/></svg>
</main>

<footer class="zoombar d-flex">
 <div class="zg g">
  <div><svg viewBox="0 0 26 24" fill="none" stroke="#9f9f9f" stroke-width="1.800"><rect x="9.500" y="2" width="7" height="12" rx="3.500" fill="#9f9f9f"/><path d="M6.500 11c0 8.500 13 8.500 13 0M13 18v4M9 22.300h8"/><path d="M2 23.500 24 .5" stroke="#ef4d55" stroke-width="1.500"/></svg>Unmute</div>
  <div class="c"><svg><use href="#up"/></svg></div>
  <div><svg viewBox="0 0 26 24" fill="#9f9f9f"><rect x="1" y="4.500" width="16" height="15" rx="3"/><path d="m18.500 10 6.500-4.500v13L18.500 14z"/><path d="M2 23.500 24 .5" stroke="#ef4d55" stroke-width="1.500"/></svg>Start Video</div>
  <div class="c"><svg><use href="#up"/></svg></div>
  <div><svg viewBox="0 0 26 24" fill="#a5a5a5"><circle cx="9.500" cy="7.500" r="4"/><circle cx="18.500" cy="8.500" r="3.600"/><path d="M1 18.500c0-7 15-7 15 0 0 2.500-2 2.500-4 2.500H5c-2 0-4 0-4-2.500M15 13.500c3-2 10-1.500 10 5 0 2.500-2 2.500-3.500 2.500h-5c1.500-2 1-6-1.500-7.500"/></svg>Participants<span class="cnt">5</span></div>
  <div><svg viewBox="0 0 26 24" fill="#a5a5a5"><path d="M6 3h14a3 3 0 0 1 3 3v9a3 3 0 0 1-3 3h-7l-5 4v-4H6a3 3 0 0 1-3-3V6a3 3 0 0 1 3-3"/></svg>Chat</div>
  <div class="c"><svg><use href="#up"/></svg></div>
  <div class="share"><svg viewBox="0 0 26 24"><rect x="1" y="3" width="24" height="18" rx="3.500" fill="#23d95b"/><path d="M13 17V8M9 11.500l4-4 4 4" fill="none" stroke="#1a1a1a" stroke-width="1.800"/></svg>Share Screen</div>
  <div><svg viewBox="0 0 26 24"><circle cx="13" cy="12" r="9.500" fill="none" stroke="#a5a5a5" stroke-width="1.300"/><circle cx="13" cy="12" r="7" fill="#a5a5a5"/></svg>Record</div>
  <div><svg viewBox="0 0 26 24"><rect x="1" y="3" width="24" height="18" rx="3.500" fill="#a5a5a5"/><text x="13" y="16" font-size="11" font-weight="700" text-anchor="middle" fill="#1a1a1a">CC</text></svg>Closed Caption</div>
  <div><svg viewBox="0 0 26 24" fill="#a5a5a5"><rect x="3" y="2" width="9" height="9" rx="1.500"/><rect x="14" y="2" width="9" height="9" rx="1.500"/><rect x="3" y="13" width="9" height="9" rx="1.500"/><rect x="14" y="13" width="9" height="9" rx="1.500"/></svg>Breakout Rooms</div>
  <div><svg viewBox="0 0 26 24"><circle cx="13" cy="12" r="9" fill="#a5a5a5"/><path d="M21.500 0v8M17.500 4h8" stroke="#1a1a1a" stroke-width="4"/><path d="M21.500.5v7M18 4h7" stroke="#a5a5a5" stroke-width="1.300"/><circle cx="10" cy="10" r="1.300" fill="#1a1a1a"/><circle cx="16" cy="10" r="1.300" fill="#1a1a1a"/><path d="M9 13.500c1 3.500 7 3.500 8 0" fill="none" stroke="#1a1a1a" stroke-width="1.500"/></svg>Reactions</div>
  <div><svg viewBox="0 0 26 24" fill="none" stroke="#a5a5a5" stroke-width="1.500"><path d="M6 13V8.500a3 3 0 0 1 3-3h5M20 12.500V17a3 3 0 0 1-3 3h-4"/><circle cx="18" cy="7.500" r="2.300"/><circle cx="8" cy="18" r="2.300"/></svg>Apps</div>
  <div><svg viewBox="0 0 26 24" fill="none" stroke="#a5a5a5" stroke-width="1.500"><path d="M9.500 17.500H6.500a3 3 0 0 1-3-3v-9a2.500 2.500 0 0 1 2.500-2.500h14a2.500 2.500 0 0 1 2.500 2.500v9"/><rect x="12" y="16" width="10.500" height="2.500" rx="1.200" fill="#a5a5a5"/></svg>Whiteboards</div>
 </div>
 <div class="leave">Leave Room</div>
</footer>
</body>
</html>
